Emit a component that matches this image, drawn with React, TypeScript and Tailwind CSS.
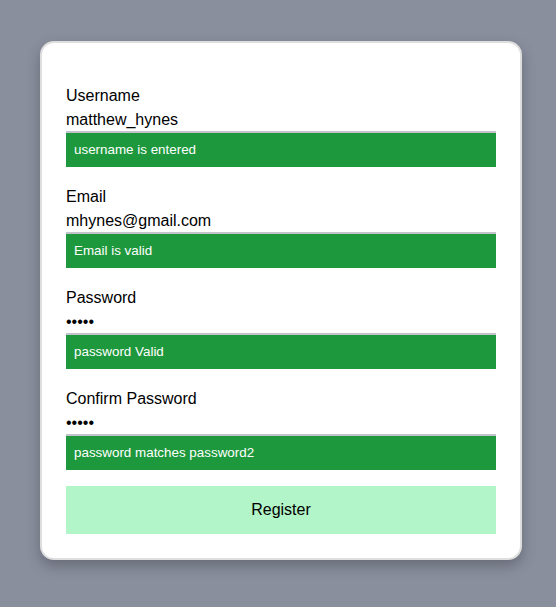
import { useState } from "react";

type Field = {
  label: string;
  type: string;
  value: string;
  message: string;
};

const fields: Field[] = [
  { label: "Username", type: "text", value: "matthew_hynes", message: "username is entered" },
  { label: "Email", type: "email", value: "mhynes@gmail.com", message: "Email is valid" },
  { label: "Password", type: "password", value: "abcde", message: "password Valid" },
  { label: "Confirm Password", type: "password", value: "abcde", message: "password matches password2" },
];

const FormField: React.FC<{ field: Field }> = ({ field }) => {
  const [value, setValue] = useState(field.value);
  return (
    <div className="flex flex-col">
      <label className="text-[16px] leading-[1.15] text-black">{field.label}</label>
      <input
        type={field.type}
        value={value}
        onChange={(e) => setValue(e.target.value)}
        className="h-[28px] pt-[6px] pb-[2px] text-[16px] leading-[18px] text-black bg-transparent border-b-2 border-[#c3c4cb] outline-none"
      />
      <div className="h-[34px] pt-[9px] px-[8px] bg-[#1e983c] text-white text-[13.4px] leading-[15px]">
        {field.message}
      </div>
    </div>
  );
};

export default function App() {
  return (
    <div
      className="min-h-screen bg-[#8a8f9e] pt-[41px] pl-[40px]"
      style={{ fontFamily: '"Liberation Sans", Arial, sans-serif' }}
    >
      <form
        onSubmit={(e) => e.preventDefault()}
        className="w-[482px] bg-white border-2 border-[#dedede] rounded-[14px] shadow-[0_6px_14px_rgba(0,0,0,0.25)] px-[24px] pt-[44px] pb-[24px]"
      >
        <div className="flex flex-col gap-[20.5px]">
          {fields.map((f, i) => (
            <FormField key={`field-${i}`} field={f} />
          ))}
        </div>
        <button
          type="submit"
          className="mt-[16px] w-full h-[48px] bg-[#b2f5c8] text-black text-[16px]"
        >
          Register
        </button>
      </form>
    </div>
  );
}
